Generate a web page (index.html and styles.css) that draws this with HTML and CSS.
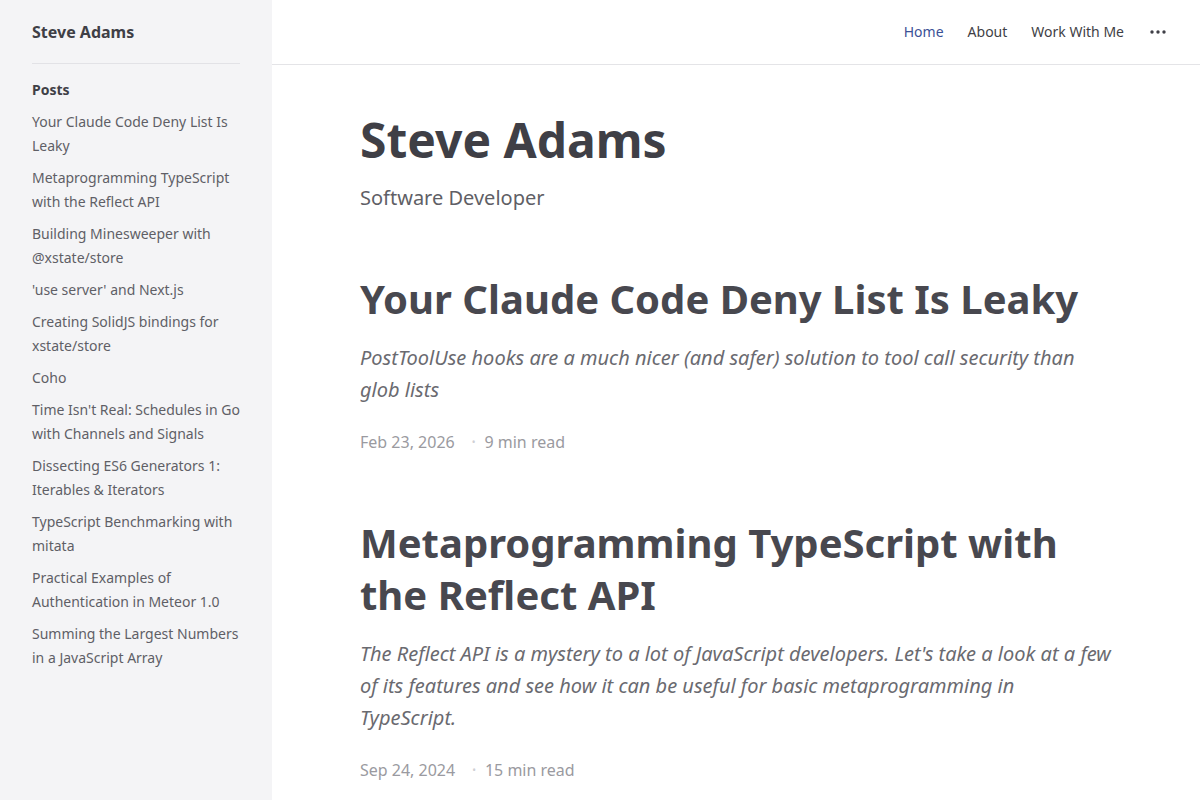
FILE: index.html
```html
<!DOCTYPE html>
<html lang="en">
<head>
  <meta charset="UTF-8" />
  <meta name="viewport" content="width=device-width, initial-scale=1.0"/>
  <title>Steve Adams</title>
  <link rel="stylesheet" href="styles.css">
</head>
<body>
  <aside class="sidebar">
    <a class="site-name" href="#">Steve Adams</a>
    <nav class="side-nav">
      <div class="side-heading">Posts</div>
      <a href="#">Your Claude Code Deny List Is Leaky</a>
      <a href="#">Metaprogramming TypeScript with the Reflect API</a>
      <a href="#">Building Minesweeper with @xstate/store</a>
      <a href="#">'use server' and Next.js</a>
      <a href="#">Creating SolidJS bindings for xstate/store</a>
      <a href="#">Coho</a>
      <a href="#">Time Isn't Real: Schedules in Go with Channels and Signals</a>
      <a href="#">Dissecting ES6 Generators 1: Iterables &amp; Iterators</a>
      <a href="#">TypeScript Benchmarking with mitata</a>
      <a href="#">Practical Examples of Authentication in Meteor 1.0</a>
      <a href="#">Summing the Largest Numbers in a JavaScript Array</a>
    </nav>
  </aside>

  <div class="page">
    <header class="topbar">
      <nav class="top-nav">
        <a href="#" class="active">Home</a>
        <a href="#">About</a>
        <a href="#">Work With Me</a>
        <button class="more" aria-label="More">
          <svg width="16" height="4" viewBox="0 0 16 4"><circle cx="2" cy="2" r="1.7"/><circle cx="8" cy="2" r="1.7"/><circle cx="14" cy="2" r="1.7"/></svg>
        </button>
      </nav>
    </header>

    <main class="content">
      <section class="intro">
        <h1>Steve Adams</h1>
        <p class="tagline">Software Developer</p>
      </section>

      <article class="post">
        <h2><a href="#">Your Claude Code Deny List Is Leaky</a></h2>
        <p class="excerpt">PostToolUse hooks are a much nicer (and safer) solution to tool call security than glob lists</p>
        <div class="meta"><span>Feb 23, 2026</span><span class="dot">•</span><span>9 min read</span></div>
      </article>

      <article class="post">
        <h2><a href="#">Metaprogramming TypeScript with the Reflect API</a></h2>
        <p class="excerpt">The Reflect API is a mystery to a lot of JavaScript developers. Let's take a look at a few of its features and see how it can be useful for basic metaprogramming in TypeScript.</p>
        <div class="meta"><span>Sep 24, 2024</span><span class="dot">•</span><span>15 min read</span></div>
      </article>
    </main>
  </div>
</body>
</html>
```

FILE: styles.css
```css
* {
  margin: 0;
  padding: 0;
  box-sizing: border-box;
}

body {
  font-family: "Noto Sans", "Open Sans", sans-serif;
  color: #3f3f46;
  background: #fff;
  display: flex;
  height: 100vh;
  overflow: hidden;
}

a {
  color: inherit;
  text-decoration: none;
}

.sidebar {
  width: 272px;
  flex-shrink: 0;
  background: #f4f4f6;
  padding: 0 32px;
}

.site-name {
  display: block;
  height: 64px;
  line-height: 64px;
  font-size: 16px;
  font-weight: 700;
  color: #3f3f46;
  border-bottom: 1px solid #e2e2e6;
}

.side-nav {
  display: flex;
  flex-direction: column;
  gap: 8px;
  padding-top: 14px;
  font-size: 14px;
  line-height: 24px;
}

.side-heading {
  font-weight: 700;
  color: #3f3f46;
}

.side-nav a {
  color: #5f5f66;
}

.page {
  flex: 1;
  display: flex;
  flex-direction: column;
}

.topbar {
  height: 65px;
  border-bottom: 1px solid #e4e4e7;
  display: flex;
  justify-content: flex-end;
  align-items: center;
  padding: 0 34px 1px 32px;
}

.top-nav {
  display: flex;
  align-items: center;
  gap: 24px;
  font-size: 14px;
}

.top-nav a {
  color: #3f3f46;
}

.top-nav a.active {
  color: #3b5196;
}

.more {
  border: none;
  background: none;
  display: flex;
  align-items: center;
  fill: #3f3f46;
  margin-left: 2px;
  cursor: pointer;
}

.content {
  padding: 43px 88px 0;
  max-width: 928px;
}

.intro h1 {
  font-size: 48px;
  line-height: 64px;
  font-weight: 700;
  color: #3f3f46;
}

.tagline {
  font-size: 20px;
  line-height: 32px;
  color: #5f5f66;
  margin-top: 10px;
}

.post {
  margin-top: 59px;
}

.post + .post {
  margin-top: 63px;
}

.post h2 {
  font-size: 40px;
  line-height: 52px;
  font-weight: 700;
  color: #48484f;
}

.excerpt {
  margin-top: 17px;
  font-size: 20px;
  line-height: 32px;
  font-style: italic;
  color: #6a6a70;
}

.meta {
  margin-top: 24px;
  font-size: 16px;
  line-height: 24px;
  color: #9a9aa0;
  display: flex;
  align-items: center;
}

.dot {
  font-size: 10px;
  color: #cfcfd4;
  margin: 0 9px 0 17px;
}
```
